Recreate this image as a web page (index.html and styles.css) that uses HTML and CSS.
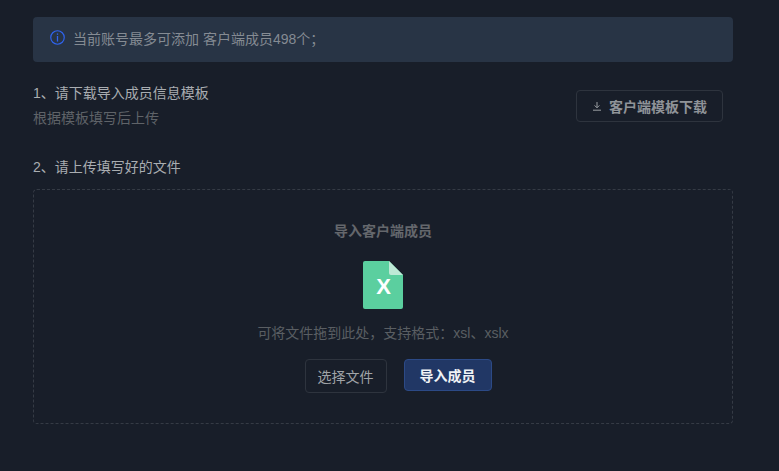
FILE: index.html
```html
<!DOCTYPE html>
<html lang="zh-CN">
<head>
    <meta charset="UTF-8">
    <title>导入客户端成员</title>
    <link rel="stylesheet" href="styles.css">
</head>
<body>
    <div class="container">
        <div class="notice">
            <svg class="notice-icon" width="15" height="15" viewBox="0 0 14 14" fill="none">
                <circle cx="7" cy="7" r="6.3" stroke="#2f64f0" stroke-width="1.1"/>
                <rect x="6.4" y="3.2" width="1.2" height="1.3" fill="#2f64f0"/>
                <rect x="6.4" y="5.6" width="1.2" height="5.2" fill="#2f64f0"/>
            </svg>
            <span>当前账号最多可添加 客户端成员498个；</span>
        </div>

        <div class="step-row">
            <div>
                <div class="step-title">1、请下载导入成员信息模板</div>
                <div class="step-desc">根据模板填写后上传</div>
            </div>
            <button class="btn btn-download">
                <svg width="10" height="10" viewBox="0 0 10 10" fill="none" stroke="#9a9ea3" stroke-width="1">
                    <path d="M5 1v5.6M2.6 4.4L5 6.8l2.4-2.4M1 9.2h8"/>
                </svg>
                客户端模板下载
            </button>
        </div>

        <div class="step-title step-upload">2、请上传填写好的文件</div>

        <div class="dropzone">
            <div class="drop-title">导入客户端成员</div>
            <svg class="file-icon" width="40" height="48" viewBox="0 0 40 48">
                <path d="M2 0h24l14 14v32a2 2 0 0 1-2 2H2a2 2 0 0 1-2-2V2a2 2 0 0 1 2-2z" fill="#5bcf9f"/>
                <path d="M26 0l14 14H28a2 2 0 0 1-2-2z" fill="#bde9d6"/>
                <text x="20.5" y="33" text-anchor="middle" class="file-letter">X</text>
            </svg>
            <div class="drop-hint">可将文件拖到此处，支持格式：xsl、xslx</div>
            <div class="drop-actions">
                <button class="btn btn-select">选择文件</button>
                <button class="btn btn-primary">导入成员</button>
            </div>
        </div>
    </div>
</body>
</html>
```

FILE: styles.css
```css
body {
    margin: 0;
    background-color: #181e29;
    font-family: "Liberation Sans", "Noto Sans CJK SC", sans-serif;
    font-size: 14px;
    color: #a6aaae;
}

.container {
    width: 700px;
    margin-left: 33px;
    padding-top: 17px;
}

.notice {
    display: flex;
    align-items: center;
    gap: 8px;
    height: 45px;
    box-sizing: border-box;
    padding: 0 17px 3px;
    background-color: #283445;
    border-radius: 4px;
    color: #858b93;
}

.notice-icon {
    margin-bottom: 2px;
}

.step-row {
    display: flex;
    justify-content: space-between;
    align-items: center;
    margin-top: 21px;
    padding-right: 10px;
}

.step-title {
    line-height: 20px;
    color: #a9adb1;
}

.step-desc {
    margin-top: 5px;
    line-height: 20px;
    color: #5f6368;
}

.step-upload {
    margin-top: 29px;
}

.btn {
    font-family: inherit;
    font-size: 14px;
    border-radius: 4px;
    cursor: pointer;
    background: none;
    padding: 0;
}

.btn-download {
    display: flex;
    align-items: center;
    justify-content: center;
    gap: 7px;
    width: 147px;
    height: 32px;
    margin-top: 1px;
    border: 1px solid #2e343e;
    color: #8f9398;
    font-weight: bold;
}

.dropzone {
    display: flex;
    flex-direction: column;
    align-items: center;
    height: 235px;
    box-sizing: border-box;
    margin-top: 12px;
    padding-top: 31px;
    border: 1px dashed #353b45;
    border-radius: 4px;
}

.drop-title {
    line-height: 20px;
    font-weight: bold;
    color: #64676c;
}

.file-icon {
    display: block;
    margin-top: 20px;
}

.file-letter {
    font-family: "Liberation Sans", sans-serif;
    font-size: 22px;
    font-weight: bold;
    fill: #fff;
}

.drop-hint {
    margin-top: 14px;
    line-height: 20px;
    color: #5a5e63;
}

.drop-actions {
    display: flex;
    align-items: flex-start;
    gap: 17px;
    margin-top: 16px;
    margin-left: 30px;
}

.btn-select {
    width: 82px;
    height: 34px;
    border: 1px solid #2e343e;
    color: #a0a4a8;
}

.btn-primary {
    width: 88px;
    height: 32px;
    border: 1px solid #2c4a86;
    background-color: #213765;
    color: #f0f2f5;
    font-weight: bold;
}
```
